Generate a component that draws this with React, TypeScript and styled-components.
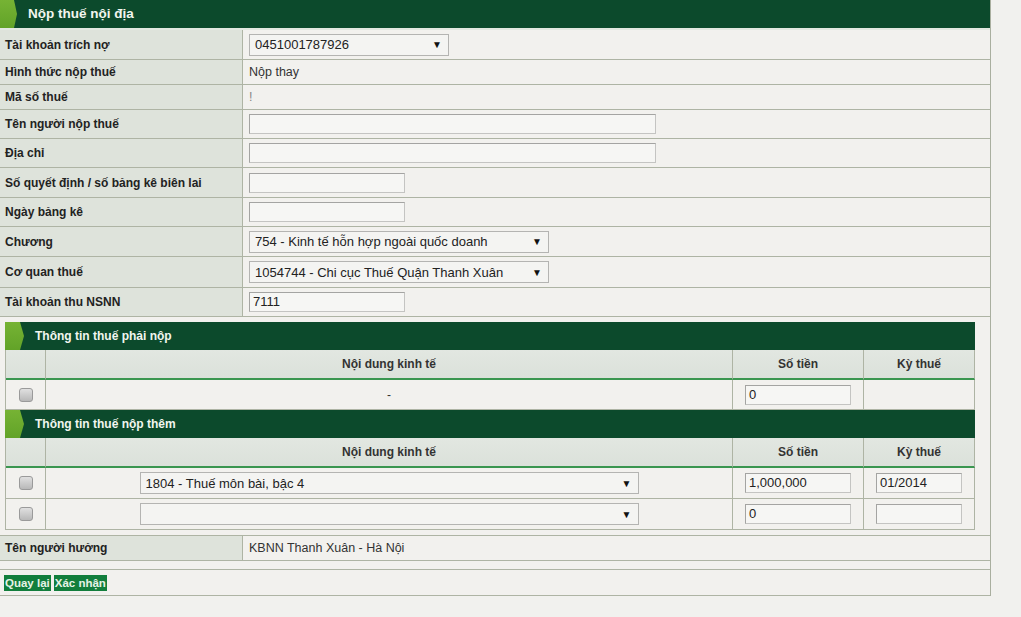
import { FC } from "react";
import styled, { createGlobalStyle } from "styled-components";

const GlobalStyle = createGlobalStyle`
  body {
    margin: 0;
    background: #f1f1ee;
    font-family: "Liberation Sans", Arial, sans-serif;
    color: #222;
  }
`;

const Form = styled.div`
  width: 991px;
  box-sizing: border-box;
  border-right: 1px solid #a9af9f;
  background: #f2f1ee;
`;

const SectionBar = styled.div`
  position: relative;
  height: 28px;
  background: #0c4a2c;
  border-bottom: 2px solid #e3e9e1;
  color: #f2f6ef;
  font-size: 13.5px;
  font-weight: bold;
  line-height: 28px;
  padding-left: 28px;
  &::before {
    content: "";
    position: absolute;
    left: 0;
    top: 0;
    width: 17px;
    height: 28px;
    background: linear-gradient(#76b334, #62a328);
    clip-path: polygon(0 0, 14px 0, 17px 14px, 14px 28px, 0 28px);
  }
`;

const SubBar = styled(SectionBar)`
  border-bottom: none;
  font-size: 12px;
  padding-left: 30px;
  &::before {
    left: 0;
    width: 19px;
    clip-path: polygon(0 0, 15px 0, 19px 14px, 15px 28px, 0 28px);
  }
`;

const FieldRow = styled.div<{ $h: number }>`
  display: grid;
  grid-template-columns: 243px 1fr;
  height: ${(p) => p.$h}px;
  border-bottom: 1px solid #aeb4a4;
  box-sizing: border-box;
`;

const Label = styled.div`
  background: #dee3db;
  border-right: 1px solid #aeb4a4;
  font-size: 12px;
  font-weight: bold;
  color: #222;
  display: flex;
  align-items: center;
  padding-left: 5px;
`;

const Value = styled.div<{ $muted?: boolean }>`
  display: flex;
  align-items: center;
  padding-left: 6px;
  font-size: 12.5px;
  color: ${(p) => (p.$muted ? "#888" : "#333")};
`;

const TextBox = styled.div<{ $w: number }>`
  width: ${(p) => p.$w}px;
  height: 20px;
  box-sizing: border-box;
  border: 1px solid #c4c4c2;
  border-top-color: #a4a4a2;
  border-left-color: #a4a4a2;
  background: #f6f6f4;
  font-size: 13px;
  color: #222;
  line-height: 18px;
  padding-left: 3px;
  text-align: left;
`;

const Dropdown = styled.div<{ $w: number }>`
  width: ${(p) => p.$w}px;
  height: 22px;
  box-sizing: border-box;
  border: 1px solid #b4b4b2;
  background: #f4f4f2;
  display: flex;
  align-items: center;
  justify-content: space-between;
  padding: 0 6px 0 5px;
  font-size: 13px;
  color: #222;
  text-align: left;
  span:last-child {
    font-size: 10px;
    color: #111;
  }
`;

const Nested = styled.div`
  padding: 5px 15px 5px 5px;
  border-bottom: 1px solid #aeb4a4;
`;

const Grid = styled.div`
  display: grid;
  grid-template-columns: 40px 687px 131px 1fr;
  border-left: 1px solid #aeb4a4;
`;

const HeadCell = styled.div`
  height: 30px;
  box-sizing: border-box;
  background: linear-gradient(#e2e7e1, #dbe1da);
  border-right: 1px solid #aeb4a4;
  border-bottom: 2px solid #3a9650;
  display: flex;
  align-items: center;
  justify-content: center;
  font-size: 12px;
  font-weight: bold;
  color: #333;
`;

const Cell = styled.div<{ $h: number }>`
  height: ${(p) => p.$h}px;
  box-sizing: border-box;
  border-right: 1px solid #aeb4a4;
  border-bottom: 1px solid #aeb4a4;
  display: flex;
  align-items: center;
  justify-content: center;
  font-size: 12px;
  color: #333;
`;

const Check = styled.span`
  width: 12px;
  height: 12px;
  border: 1px solid #9a9a9a;
  border-radius: 3px;
  background: linear-gradient(#e0e0e0, #b8b8b8);
`;

const Spacer = styled.div`
  height: 8px;
  border-bottom: 1px solid #aeb4a4;
`;

const Actions = styled.div`
  height: 26px;
  box-sizing: border-box;
  border-bottom: 1px solid #aeb4a4;
  display: flex;
  gap: 3px;
  padding: 5px 0 0 4px;
  align-items: flex-start;
`;

const Button = styled.button`
  height: 16px;
  border: none;
  padding: 0 1px;
  background: #127e3c;
  color: #e6f3e6;
  font-family: "Liberation Sans", Arial, sans-serif;
  font-size: 11.5px;
  font-weight: bold;
  line-height: 16px;
`;

const Select: FC<{ w: number; text?: string }> = ({ w, text }) => (
  <Dropdown $w={w}>
    <span>{text}</span>
    <span>▼</span>
  </Dropdown>
);

const fields: { label: string; h: number; body: JSX.Element | string; muted?: boolean }[] = [
  { label: "Tài khoản trích nợ", h: 30, body: <Select w={200} text="0451001787926" /> },
  { label: "Hình thức nộp thuế", h: 25, body: "Nộp thay" },
  { label: "Mã số thuế", h: 25, body: "!", muted: true },
  { label: "Tên người nộp thuế", h: 29, body: <TextBox $w={407} /> },
  { label: "Địa chỉ", h: 29, body: <TextBox $w={407} /> },
  { label: "Số quyết định / số bảng kê biên lai", h: 30, body: <TextBox $w={156} /> },
  { label: "Ngày bảng kê", h: 29, body: <TextBox $w={156} /> },
  { label: "Chương", h: 30, body: <Select w={300} text="754 - Kinh tế hỗn hợp ngoài quốc doanh" /> },
  { label: "Cơ quan thuế", h: 31, body: <Select w={300} text="1054744 - Chi cục Thuế Quận Thanh Xuân" /> },
  { label: "Tài khoản thu NSNN", h: 29, body: <TextBox $w={156}>7111</TextBox> },
];

const Header = () => (
  <>
    <HeadCell />
    <HeadCell>Nội dung kinh tế</HeadCell>
    <HeadCell>Số tiền</HeadCell>
    <HeadCell>Kỳ thuế</HeadCell>
  </>
);

export default function App() {
  return (
    <>
      <GlobalStyle />
      <Form>
        <SectionBar>Nộp thuế nội địa</SectionBar>
        {fields.map((f) => (
          <FieldRow $h={f.h} key={f.label}>
            <Label>{f.label}</Label>
            <Value $muted={f.muted}>{f.body}</Value>
          </FieldRow>
        ))}
        <Nested>
          <SubBar>Thông tin thuế phải nộp</SubBar>
          <Grid>
            <Header />
            <Cell $h={30}><Check /></Cell>
            <Cell $h={30}>-</Cell>
            <Cell $h={30}><TextBox $w={106}>0</TextBox></Cell>
            <Cell $h={30} />
          </Grid>
          <SubBar>Thông tin thuế nộp thêm</SubBar>
          <Grid>
            <Header />
            <Cell $h={31}><Check /></Cell>
            <Cell $h={31}><Select w={499} text="1804 - Thuế môn bài, bậc 4" /></Cell>
            <Cell $h={31}><TextBox $w={106}>1,000,000</TextBox></Cell>
            <Cell $h={31}><TextBox $w={86}>01/2014</TextBox></Cell>
            <Cell $h={31}><Check /></Cell>
            <Cell $h={31}><Select w={499} /></Cell>
            <Cell $h={31}><TextBox $w={106}>0</TextBox></Cell>
            <Cell $h={31}><TextBox $w={86} /></Cell>
          </Grid>
        </Nested>
        <FieldRow $h={25}>
          <Label>Tên người hưởng</Label>
          <Value>KBNN Thanh Xuân - Hà Nội</Value>
        </FieldRow>
        <Spacer />
        <Actions>
          <Button>Quay lại</Button>
          <Button>Xác nhận</Button>
        </Actions>
      </Form>
    </>
  );
}
